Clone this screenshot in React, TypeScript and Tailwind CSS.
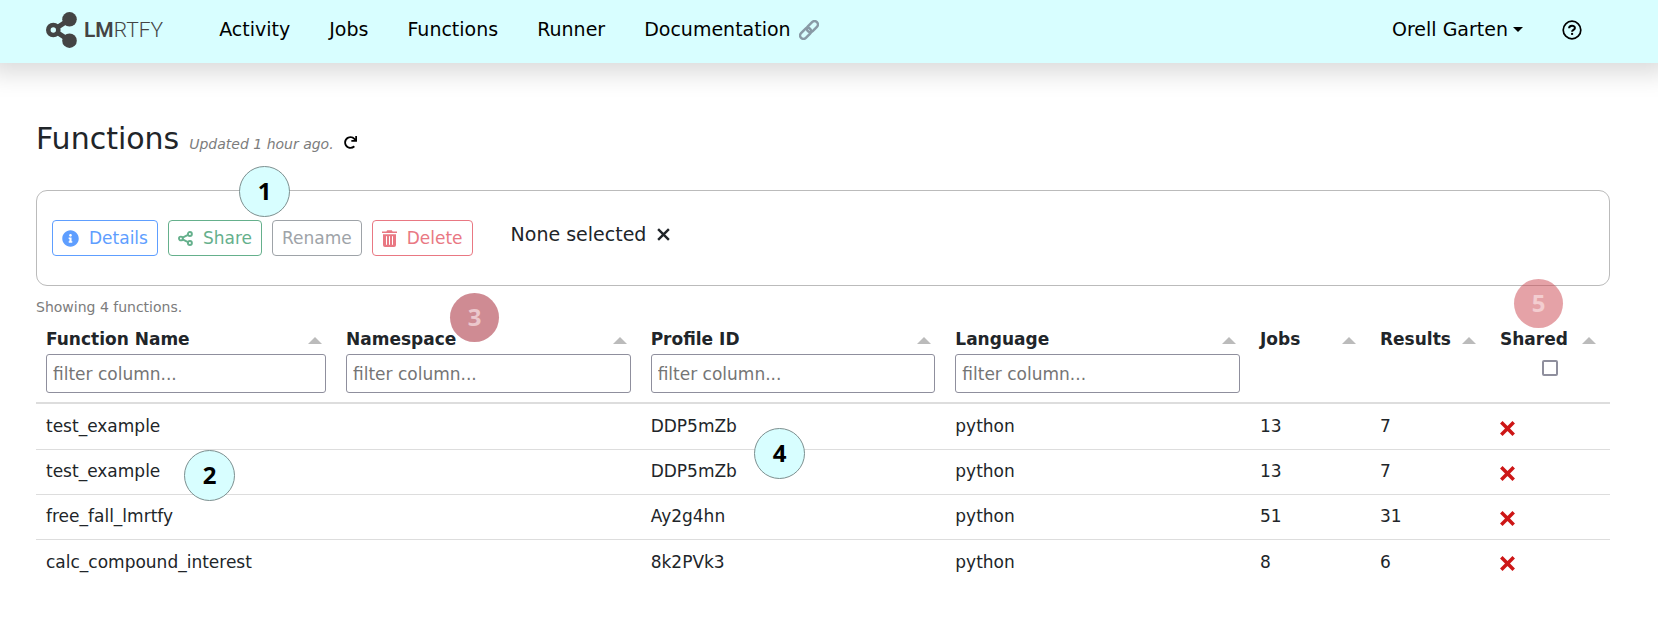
import React from "react";
import { FaInfoCircle, FaRedo } from "react-icons/fa";

type Row = { name: string; profile: string; language: string; jobs: number; results: number };

const rows: Row[] = [
  { name: "test_example", profile: "DDP5mZb", language: "python", jobs: 13, results: 7 },
  { name: "test_example", profile: "DDP5mZb", language: "python", jobs: 13, results: 7 },
  { name: "free_fall_lmrtfy", profile: "Ay2g4hn", language: "python", jobs: 51, results: 31 },
  { name: "calc_compound_interest", profile: "8k2PVk3", language: "python", jobs: 8, results: 6 },
];

const columns = [
  { title: "Function Name", filter: "text", width: "w-[300px]" },
  { title: "Namespace", filter: "text", width: "" },
  { title: "Profile ID", filter: "text", width: "" },
  { title: "Language", filter: "text", width: "" },
  { title: "Jobs", filter: "none", width: "w-[120px]" },
  { title: "Results", filter: "none", width: "w-[120px]" },
  { title: "Shared", filter: "check", width: "w-[120px]" },
];

function Logo() {
  return (
    <a href="#" aria-label="LMRTFY" className="flex items-center gap-[7px] text-[#444]">
      <svg width="31" height="36" viewBox="0 0 31 36" aria-hidden="true">
        <path d="M23.5 7.5 L7.5 18 L23.5 28.5" fill="none" stroke="currentColor" strokeWidth="5" />
        <circle cx="23.5" cy="7.3" r="7.3" fill="currentColor" />
        <circle cx="23.5" cy="28.7" r="7.3" fill="currentColor" />
        <circle cx="7.3" cy="18" r="5" fill="#d8feff" stroke="currentColor" strokeWidth="4.6" />
      </svg>
      <span className="font-['Roboto'] text-[21px] leading-6">
        <span className="font-semibold">LM</span>
        <span className="font-light">RTFY</span>
      </span>
    </a>
  );
}

function LinkIcon() {
  return (
    <svg width="20" height="20" viewBox="0 0 20 20" fill="none" stroke="#899aa6" strokeWidth="2.5" aria-hidden="true">
      <g transform="rotate(-45 10 10)">
        <rect x="-1.2" y="6.6" width="12.8" height="6.8" rx="3.4" />
        <rect x="8.4" y="6.6" width="12.8" height="6.8" rx="3.4" />
      </g>
    </svg>
  );
}

function HelpIcon() {
  return (
    <svg width="20" height="20" viewBox="0 0 20 20" fill="none" stroke="#000" aria-hidden="true">
      <circle cx="10" cy="10" r="8.8" strokeWidth="1.7" />
      <path d="M7.1 8.3 C7.1 4.9 12.9 4.9 12.9 8 C12.9 9.9 10.1 9.9 10.1 11.8" strokeWidth="2" />
      <rect x="9.1" y="12.9" width="2" height="2" fill="#000" stroke="none" />
    </svg>
  );
}

function ShareIcon() {
  return (
    <svg width="15" height="15" viewBox="0 0 15 15" fill="none" stroke="currentColor" strokeWidth="1.9" aria-hidden="true">
      <circle cx="2.9" cy="7.5" r="1.9" />
      <circle cx="11.9" cy="3" r="2" />
      <circle cx="11.9" cy="12" r="2" />
      <path d="M4.6 6.6 L10 3.9 M4.6 8.4 L10 11.1" />
    </svg>
  );
}

function TrashIcon() {
  return (
    <svg width="15" height="17" viewBox="0 0 15 17" fill="none" aria-hidden="true">
      <path d="M0 1.4 H4.4 L5.2 0.2 H9.8 L10.6 1.4 H15 V3 H0 Z" fill="currentColor" />
      <path d="M1 4.2 H14 V15 Q14 17 12 17 H3 Q1 17 1 15 Z" fill="currentColor" />
      <path d="M4.5 6.2 V14.8 M7.5 6.2 V14.8 M10.5 6.2 V14.8" stroke="#fff" strokeWidth="1" />
    </svg>
  );
}

function Cross({ className, size, stroke }: { className: string; size: number; stroke: number }) {
  return (
    <svg className={className} width={size} height={size} viewBox="0 0 14 14" fill="none" stroke="currentColor" strokeWidth={stroke} aria-hidden="true">
      <path d="M1.2 1.2 L12.8 12.8 M12.8 1.2 L1.2 12.8" />
    </svg>
  );
}

function Marker({ n, tone, place }: { n: number; tone: "cyan" | "rose" | "pink"; place: string }) {
  const tones = {
    cyan: "size-[51px] border border-[#7c8f8f] bg-[#d8feff] text-black",
    rose: "size-[49px] bg-[#cf8b93] text-[#ebc7cc]",
    pink: "size-[49px] bg-[#cc4650]/50 text-[#f3cdd0]",
  };
  return (
    <span className={`absolute flex items-center justify-center rounded-full pb-0.5 font-['Noto_Sans'] text-2xl font-bold ${tones[tone]} ${place}`}>
      {n}
    </span>
  );
}

const buttonBase = "flex h-9 items-center rounded border px-[9px] pt-px text-[17px]";

export default function App() {
  return (
    <div className="relative min-h-screen bg-white font-['DejaVu_Sans',sans-serif] text-[#212529]">
      <header className="flex h-[63px] items-center bg-[#d8feff] pr-[76px] pb-1 pl-[46px] text-[19px] text-black shadow-[0_-2px_24px_12px_rgba(0,0,0,0.15)]">
        <Logo />
        <nav className="ml-14 flex flex-1 items-center gap-[39px]">
          <a href="#activity">Activity</a>
          <a href="#jobs">Jobs</a>
          <a href="#functions">Functions</a>
          <a href="#runner">Runner</a>
          <a href="#documentation" className="flex items-center gap-2">
            Documentation
            <LinkIcon />
          </a>
        </nav>
        <button type="button" className="flex items-center gap-[5px]">
          Orell Garten
          <svg width="10" height="5" viewBox="0 0 10 5" aria-hidden="true">
            <path d="M0 0 H10 L5 5 Z" />
          </svg>
        </button>
        <button type="button" aria-label="Help" className="ml-[39px]">
          <HelpIcon />
        </button>
      </header>

      <main className="pt-[55px] pr-12 pl-9">
        <div className="flex items-baseline">
          <h1 className="text-[30px] leading-[42px]">Functions</h1>
          <span className="ml-2.5 text-sm text-[#7c7c7c] italic">Updated 1 hour ago.</span>
          <button type="button" aria-label="Refresh" className="ml-2.5 text-black">
            <FaRedo size={13} />
          </button>
        </div>

        <section className="mt-[30px] flex h-24 items-start gap-2.5 rounded-[11px] border border-[#bbb] pt-[29px] pl-[15px]">
          <button type="button" className={`${buttonBase} gap-2.5 border-[#5e9eff] text-[#5e9eff]`}>
            <FaInfoCircle size={17} />
            Details
          </button>
          <button type="button" className={`${buttonBase} gap-2.5 border-[#65b08c] text-[#65b08c]`}>
            <ShareIcon />
            Share
          </button>
          <button type="button" className={`${buttonBase} border-[#9ea3a8] text-[#9ea3a8]`}>
            Rename
          </button>
          <button type="button" className={`${buttonBase} gap-2.5 border-[#e97883] text-[#e97883]`}>
            <TrashIcon />
            Delete
          </button>
          <div className="ml-7 flex h-7 items-center gap-[11px] text-[19px]">
            None selected
            <button type="button" aria-label="Clear selection">
              <Cross className="text-[#212529]" size={13} stroke={2.6} />
            </button>
          </div>
        </section>

        <p className="mt-[11px] text-sm leading-5 text-[#7c7c7c]">Showing 4 functions.</p>

        <table className="mt-[5px] w-full table-fixed border-collapse text-left text-[17px]">
          <thead>
            <tr className="h-[81px] border-b-2 border-[#ddd] align-top">
              {columns.map((c) => (
                <th key={c.title} scope="col" className={`px-2.5 py-1 font-bold ${c.width}`}>
                  <div className="flex h-7 items-center justify-between pr-1">
                    {c.title}
                    <svg width="14" height="7" viewBox="0 0 14 7" fill="#bbb" aria-hidden="true">
                      <path d="M0 7 H14 L7 0 Z" />
                    </svg>
                  </div>
                  {c.filter === "text" && (
                    <input
                      type="text"
                      aria-label={`Filter ${c.title}`}
                      placeholder="filter column..."
                      className="block h-[39px] w-full rounded-[3px] border border-[#8f8f9d] bg-white px-1.5 font-normal placeholder:text-[#757575]"
                    />
                  )}
                  {c.filter === "check" && (
                    <input
                      type="checkbox"
                      aria-label="Filter shared"
                      className="mx-auto mt-1.5 block size-4 appearance-none rounded-[2px] border-2 border-[#8f8f9d] bg-white"
                    />
                  )}
                </th>
              ))}
            </tr>
          </thead>
          <tbody>
            {rows.map((r, i) => (
              <tr key={i} className="h-[45px] border-b border-[#ddd] first:h-[46px] last:border-b-0">
                <td className="px-2.5 pt-px">{r.name}</td>
                <td className="px-2.5 pt-px"></td>
                <td className="px-2.5 pt-px">{r.profile}</td>
                <td className="px-2.5 pt-px">{r.language}</td>
                <td className="px-2.5 pt-px">{r.jobs}</td>
                <td className="px-2.5 pt-px">{r.results}</td>
                <td className="px-2.5 pt-1">
                  <Cross className="text-[#cd1616]" size={15} stroke={3.3} />
                </td>
              </tr>
            ))}
          </tbody>
        </table>
      </main>

      <Marker n={1} tone="cyan" place="left-[239px] top-[166px]" />
      <Marker n={2} tone="cyan" place="left-[184px] top-[450px]" />
      <Marker n={3} tone="rose" place="left-[450px] top-[293px]" />
      <Marker n={4} tone="cyan" place="left-[754px] top-[428px]" />
      <Marker n={5} tone="pink" place="left-[1514px] top-[279px]" />
    </div>
  );
}
